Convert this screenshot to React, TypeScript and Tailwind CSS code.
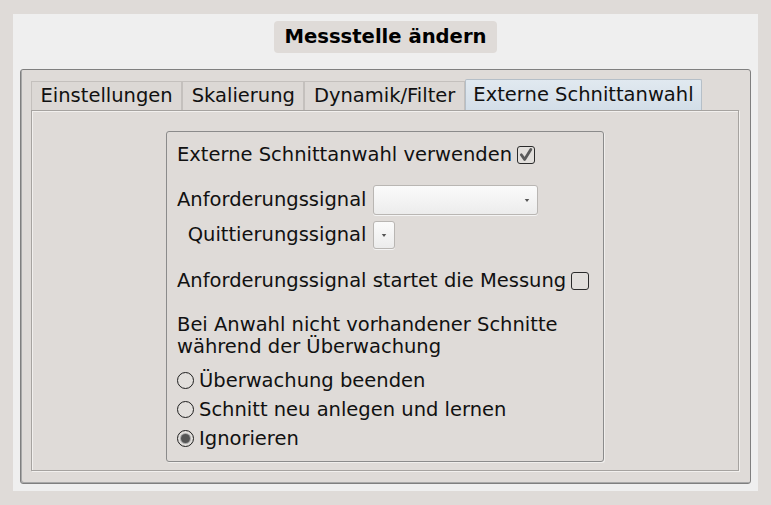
import React from "react";

function Checkbox({ checked }: { checked?: boolean }) {
  return (
    <span className="relative inline-flex h-[18px] w-[18px] items-center justify-center rounded-[3px] border-[1.5px] border-[#2b2b2b] bg-[#e2dfdc]">
      {checked && (
        <svg viewBox="0 0 18 18" className="absolute h-[18px] w-[18px]">
          <path d="M4.3 8.8 L7.6 13.4 L13.8 3.4" fill="none" stroke="#5a5a5a" strokeWidth="2.8" strokeLinecap="round" strokeLinejoin="round" />
        </svg>
      )}
    </span>
  );
}

function Radio({ checked }: { checked?: boolean }) {
  return (
    <span className="inline-flex h-[17px] w-[17px] items-center justify-center rounded-full border-[1.5px] border-[#1e1e1e] bg-[#e2dfdc]">
      {checked && <span className="h-[9px] w-[9px] rounded-full bg-[#555] shadow-[0_0_0_1px_#a9a9a9]" />}
    </span>
  );
}

function Combo({ wide }: { wide?: boolean }) {
  return (
    <div
      className={`flex items-center justify-end rounded-[3px] border border-[#b9b6b3] bg-gradient-to-b from-[#fbfbfb] to-[#ececec] shadow-[0_1px_0_#f4f4f4] ${
        wide ? "h-[30px] w-[165px] pr-[7px]" : "h-[28px] w-[22px] pr-[7px]"
      }`}
    >
      <svg viewBox="0 0 6 4" className="h-[3px] w-[6px]">
        <path d="M0 0 L6 0 L3 4 Z" fill="#555" />
      </svg>
    </div>
  );
}

const tabs = ["Einstellungen", "Skalierung", "Dynamik/Filter"];

export default function App() {
  return (
    <div
      className="h-[505px] w-[771px] bg-[#dfdbd8] pl-[13px] pt-[14px] text-[#111] antialiased"
      style={{ fontFamily: '"DejaVu Sans", Verdana, sans-serif' }}
    >
      <div className="flex h-[477px] w-[745px] flex-col items-center bg-[#efefef] px-[7px] pt-[7px]">
        <div className="flex h-[32px] items-center rounded-[4px] bg-[#dfdbd8] px-[10px] text-[19.6px] font-bold leading-none text-black">
          Messstelle ändern
        </div>

        <div className="mt-[16px] flex h-[415px] w-[731px] flex-col rounded-[3px] border border-[#7f7f7f] bg-[#dfdbd8] px-[10px] pt-[9px] shadow-[inset_1px_-1px_0_#a8a8a8]">
          <div className="flex h-[31px] items-end">
            {tabs.map((t) => (
              <div
                key={t}
                className="flex h-[29px] items-center border border-b-0 border-[#c4c0bd] bg-[#dcd8d5] px-[8.5px] text-[19.5px] leading-none"
              >
                {t}
              </div>
            ))}
            <div className="flex h-[31px] items-center rounded-t-[2px] border border-b-0 border-[#b5bfc8] bg-gradient-to-b from-[#e1e9f0] to-[#d3dee8] px-[7.5px] text-[19.5px] leading-none">
              Externe Schnittanwahl
            </div>
          </div>

          <div className="flex h-[361px] w-[708px] justify-center border border-[#a6a3a0] pt-[20px] shadow-[inset_1px_1px_0_#f2f0ee,1px_1px_0_#f2f0ee]">
            <div className="flex h-[331px] w-[438px] flex-col rounded-[3px] border border-[#8b8b8b] pl-[10px] pt-[10px] text-[19.5px] leading-none shadow-[1px_1px_0_#f0eeec]">
              <div className="flex h-[26px] items-center gap-[5px]">
                <span>Externe Schnittanwahl verwenden</span>
                <Checkbox checked />
              </div>

              <div className="mt-[17px] grid grid-cols-[auto_1fr] items-center gap-x-[6px] gap-y-[6px] justify-items-start">
                <span className="justify-self-end">Anforderungssignal</span>
                <Combo wide />
                <span className="justify-self-end">Quittierungssignal</span>
                <Combo />
              </div>

              <div className="mt-[19px] flex h-[26px] items-center gap-[5px]">
                <span>Anforderungssignal startet die Messung</span>
                <Checkbox />
              </div>

              <div className="mt-[20px] leading-[22px]">
                Bei Anwahl nicht vorhandener Schnitte
                <br />
                während der Überwachung
              </div>

              <div className="mt-[8px] flex flex-col">
                {[
                  ["Überwachung beenden", false],
                  ["Schnitt neu anlegen und lernen", false],
                  ["Ignorieren", true],
                ].map(([label, on]) => (
                  <div key={label as string} className="flex h-[29px] items-center gap-[5px]">
                    <Radio checked={on as boolean} />
                    <span>{label as string}</span>
                  </div>
                ))}
              </div>
            </div>
          </div>
        </div>
      </div>
    </div>
  );
}
